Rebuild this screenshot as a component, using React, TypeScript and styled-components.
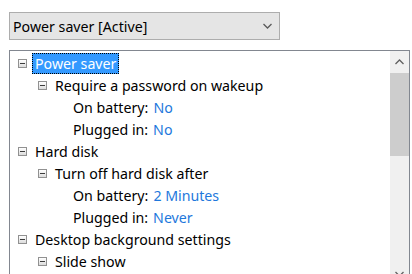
import * as React from 'react';
import styled, { createGlobalStyle } from 'styled-components';

const GlobalStyle = createGlobalStyle`
  html, body {
    margin: 0;
    padding: 0;
    background: #ffffff;
  }
  body {
    font-family: "Noto Sans", "Open Sans", sans-serif;
    font-size: 14px;
    color: #000;
  }
`;

const Page = styled.div`
  width: 412px;
  height: 274px;
  overflow: hidden;
  padding: 12px 0 0 9px;
  box-sizing: border-box;
  display: flex;
  flex-direction: column;
  gap: 10px;
`;

const Combo = styled.div`
  width: 271px;
  height: 28px;
  flex-shrink: 0;
  box-sizing: border-box;
  border: 1px solid #adadad;
  background: #e5e5e5;
  display: flex;
  align-items: center;
  justify-content: space-between;
  padding: 0 7px 0 3px;
  font-size: 14.2px;
`;

const ComboArrow = styled.span`
  display: flex;
  color: #5a5a5a;
`;

const TreeBox = styled.div`
  width: 401px;
  height: 236px;
  flex-shrink: 0;
  box-sizing: border-box;
  border: 1px solid #828790;
  display: flex;
  background: #fff;
`;

const TreeList = styled.div`
  flex: 1;
  padding-top: 1px;
  display: flex;
  flex-direction: column;
`;

const Row = styled.div<{ $level: number }>`
  height: 22px;
  flex-shrink: 0;
  display: flex;
  align-items: center;
  padding-left: ${p => 8 + p.$level * 20}px;
  gap: 6px;
  white-space: nowrap;
  font-size: 14.2px;
`;

const Leaf = styled.div`
  height: 22px;
  flex-shrink: 0;
  display: flex;
  align-items: center;
  padding-left: 63px;
  gap: 5px;
  white-space: nowrap;
  font-size: 14.2px;
`;

const Expander = styled.span`
  width: 9px;
  height: 9px;
  box-sizing: border-box;
  border: 1px solid #919191;
  background: linear-gradient(#ffffff, #dcdcdc);
  display: inline-flex;
  align-items: center;
  justify-content: center;
  flex-shrink: 0;
  &::after {
    content: '';
    width: 5px;
    height: 1px;
    background: #3c3c3c;
  }
`;

const Label = styled.span<{ $selected?: boolean }>`
  height: 21px;
  line-height: 19px;
  padding: 0 2px;
  box-sizing: border-box;
  border: 1px ${p => (p.$selected ? 'dotted #000' : 'solid transparent')};
  background: ${p => (p.$selected ? '#3399ff' : 'transparent')};
  color: ${p => (p.$selected ? '#fff' : '#000')};
  margin-left: -1px;
`;

const Value = styled.span`
  color: #1e78dc;
`;

const Scrollbar = styled.div`
  width: 19px;
  background: #f0f0f0;
  display: flex;
  flex-direction: column;
  align-items: stretch;
`;

const ArrowButton = styled.div`
  height: 22px;
  flex-shrink: 0;
  display: flex;
  align-items: center;
  justify-content: center;
  color: #606060;
`;

const Thumb = styled.div`
  height: 83px;
  flex-shrink: 0;
  background: #cdcdcd;
`;

const Track = styled.div`
  flex: 1;
`;

const Chevron = ({ up }: { up?: boolean }) => (
  <svg width="9" height="6" viewBox="0 0 9 6">
    <path
      d={up ? 'M0.5 5 L4.5 1 L8.5 5' : 'M0.5 1 L4.5 5 L8.5 1'}
      fill="none"
      stroke="currentColor"
      strokeWidth="1.3"
    />
  </svg>
);

type Group = {
  title: string;
  selected?: boolean;
  children: { title: string; settings: [string, string][] }[];
};

const tree: Group[] = [
  {
    title: 'Power saver',
    selected: true,
    children: [
      {
        title: 'Require a password on wakeup',
        settings: [
          ['On battery:', 'No'],
          ['Plugged in:', 'No'],
        ],
      },
    ],
  },
  {
    title: 'Hard disk',
    children: [
      {
        title: 'Turn off hard disk after',
        settings: [
          ['On battery:', '2 Minutes'],
          ['Plugged in:', 'Never'],
        ],
      },
    ],
  },
  {
    title: 'Desktop background settings',
    children: [{ title: 'Slide show', settings: [] }],
  },
];

export default function App() {
  return (
    <>
      <GlobalStyle />
      <Page>
        <Combo>
          <span>Power saver [Active]</span>
          <ComboArrow>
            <Chevron />
          </ComboArrow>
        </Combo>
        <TreeBox>
          <TreeList>
            {tree.map(group => (
              <React.Fragment key={group.title}>
                <Row $level={0}>
                  <Expander />
                  <Label $selected={group.selected}>{group.title}</Label>
                </Row>
                {group.children.map(child => (
                  <React.Fragment key={child.title}>
                    <Row $level={1}>
                      <Expander />
                      <Label>{child.title}</Label>
                    </Row>
                    {child.settings.map(([name, value]) => (
                      <Leaf key={name}>
                        <span>{name}</span>
                        <Value>{value}</Value>
                      </Leaf>
                    ))}
                  </React.Fragment>
                ))}
              </React.Fragment>
            ))}
          </TreeList>
          <Scrollbar>
            <ArrowButton>
              <Chevron up />
            </ArrowButton>
            <Thumb />
            <Track />
            <ArrowButton>
              <Chevron />
            </ArrowButton>
          </Scrollbar>
        </TreeBox>
      </Page>
    </>
  );
}
